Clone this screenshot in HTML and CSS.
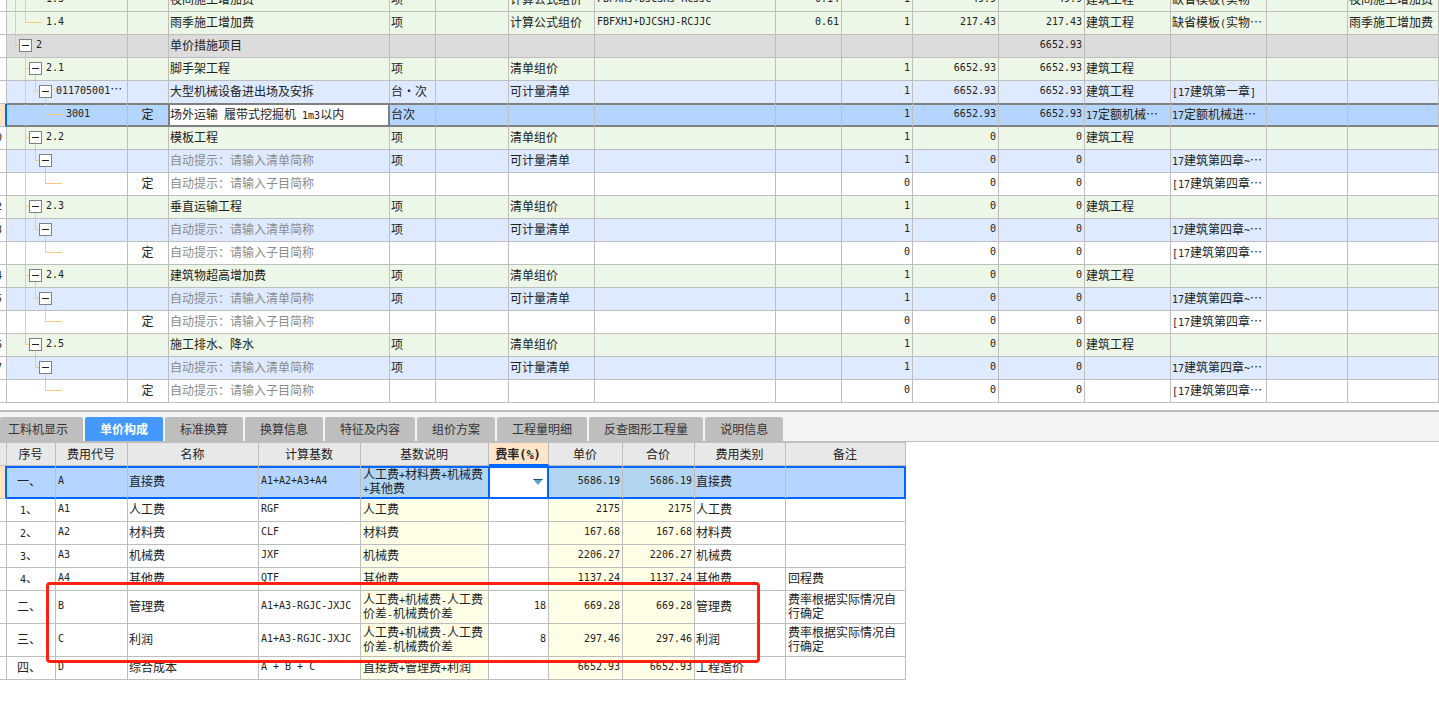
FILE: index.html
```html
<!DOCTYPE html>
<html lang="zh-CN">
<head>
<meta charset="utf-8">
<title>措施项目</title>
<link rel="stylesheet" href="styles.css">
</head>
<body>
<svg class="defs" aria-hidden="true">
  <symbol id="g-item"><path d="M8.5 0V22M18.5 0V22M18.5 10.5H35"/></symbol>
  <symbol id="g-item-last"><path d="M8.5 0V22M18.5 0V10.5H35"/></symbol>
  <symbol id="g-root"><path d="M8.5 0V10.5H12M18.5 17V22"/></symbol>
  <symbol id="g-group"><path d="M18.5 0V22M18.5 10.5H22M28.5 17V22"/></symbol>
  <symbol id="g-group-last"><path d="M18.5 0V10.5H22M28.5 17V22"/></symbol>
  <symbol id="g-list"><path d="M18.5 0V22M28.5 0V10.5H32M38.5 17V22"/></symbol>
  <symbol id="g-list-last"><path d="M28.5 0V10.5H32M38.5 17V22"/></symbol>
  <symbol id="g-leaf"><path d="M18.5 0V22M38.5 0V10.5H55"/></symbol>
  <symbol id="g-leaf-last"><path d="M38.5 0V10.5H55"/></symbol>
</svg>

<main>
<section class="measures">
<table class="grid items">
<colgroup><col class="w7"><col class="w121"><col class="w41"><col class="w221"><col class="w46"><col class="w73"><col class="w86"><col class="w181"><col class="w66"><col class="w71"><col class="w86"><col class="w86"><col class="w86"><col class="w96"><col class="w81"><col class="w91"></colgroup>
<tbody>
<tr class="group"><td></td><td><div class="tree l2"><svg><use href="#g-item"/></svg><span class="code">1.3</span></div></td><td></td><td>夜间施工增加费</td><td>项</td><td></td><td>计算公式组价</td><td>FBFXHJ+DJCSHJ-RCJJC</td><td>0.14</td><td>1</td><td>49.9</td><td>49.9</td><td>建筑工程</td><td>缺省模板<span class="n">(</span>实物…</td><td></td><td>夜间施工增加费</td></tr>
<tr class="group"><td></td><td><div class="tree l2"><svg><use href="#g-item-last"/></svg><span class="code">1.4</span></div></td><td></td><td>雨季施工增加费</td><td>项</td><td></td><td>计算公式组价</td><td>FBFXHJ+DJCSHJ-RCJJC</td><td>0.61</td><td>1</td><td>217.43</td><td>217.43</td><td>建筑工程</td><td>缺省模板<span class="n">(</span>实物…</td><td></td><td>雨季施工增加费</td></tr>
<tr class="root"><td></td><td><div class="tree l1"><svg><use href="#g-root"/></svg><button class="exp" aria-label="折叠"></button><span class="code">2</span></div></td><td></td><td>单价措施项目</td><td></td><td></td><td></td><td></td><td></td><td></td><td></td><td>6652.93</td><td></td><td></td><td></td><td></td></tr>
<tr class="group"><td></td><td><div class="tree l2"><svg><use href="#g-group"/></svg><button class="exp" aria-label="折叠"></button><span class="code">2.1</span></div></td><td></td><td>脚手架工程</td><td>项</td><td></td><td>清单组价</td><td></td><td></td><td>1</td><td>6652.93</td><td>6652.93</td><td>建筑工程</td><td></td><td></td><td></td></tr>
<tr class="list above"><td></td><td><div class="tree l3"><svg><use href="#g-list"/></svg><button class="exp" aria-label="折叠"></button><span class="code">011705001<span class="c">…</span></span></div></td><td></td><td>大型机械设备进出场及安拆</td><td>台・次</td><td></td><td>可计量清单</td><td></td><td></td><td>1</td><td>6652.93</td><td>6652.93</td><td>建筑工程</td><td><span class="n">[17</span>建筑第一章<span class="n">]</span></td><td></td><td></td></tr>
<tr class="current"><td></td><td><div class="tree l4"><svg><use href="#g-leaf"/></svg><span class="code">3001</span></div></td><td>定</td><td class="focus">场外运输<span class="n"> </span>履带式挖掘机<span class="n"> 1m3</span>以内</td><td>台次</td><td></td><td></td><td></td><td></td><td>1</td><td>6652.93</td><td>6652.93</td><td><span class="n">17</span>定额机械…</td><td><span class="n">17</span>定额机械进…</td><td></td><td></td></tr>
<tr class="group"><td><div class="no">10</div></td><td><div class="tree l2"><svg><use href="#g-group"/></svg><button class="exp" aria-label="折叠"></button><span class="code">2.2</span></div></td><td></td><td>模板工程</td><td>项</td><td></td><td>清单组价</td><td></td><td></td><td>1</td><td>0</td><td>0</td><td>建筑工程</td><td></td><td></td><td></td></tr>
<tr class="list"><td></td><td><div class="tree l3"><svg><use href="#g-list"/></svg><button class="exp" aria-label="折叠"></button></div></td><td></td><td class="hint">自动提示：请输入清单简称</td><td>项</td><td></td><td>可计量清单</td><td></td><td></td><td>1</td><td>0</td><td>0</td><td></td><td><span class="n">17</span>建筑第四章<span class="n">~</span>…</td><td></td><td></td></tr>
<tr><td></td><td><div class="tree l4"><svg><use href="#g-leaf"/></svg></div></td><td>定</td><td class="hint">自动提示：请输入子目简称</td><td></td><td></td><td></td><td></td><td></td><td>0</td><td>0</td><td>0</td><td></td><td><span class="n">[17</span>建筑第四章…</td><td></td><td></td></tr>
<tr class="group"><td><div class="no">12</div></td><td><div class="tree l2"><svg><use href="#g-group"/></svg><button class="exp" aria-label="折叠"></button><span class="code">2.3</span></div></td><td></td><td>垂直运输工程</td><td>项</td><td></td><td>清单组价</td><td></td><td></td><td>1</td><td>0</td><td>0</td><td>建筑工程</td><td></td><td></td><td></td></tr>
<tr class="list"><td><div class="no">13</div></td><td><div class="tree l3"><svg><use href="#g-list"/></svg><button class="exp" aria-label="折叠"></button></div></td><td></td><td class="hint">自动提示：请输入清单简称</td><td>项</td><td></td><td>可计量清单</td><td></td><td></td><td>1</td><td>0</td><td>0</td><td></td><td><span class="n">17</span>建筑第四章<span class="n">~</span>…</td><td></td><td></td></tr>
<tr><td></td><td><div class="tree l4"><svg><use href="#g-leaf"/></svg></div></td><td>定</td><td class="hint">自动提示：请输入子目简称</td><td></td><td></td><td></td><td></td><td></td><td>0</td><td>0</td><td>0</td><td></td><td><span class="n">[17</span>建筑第四章…</td><td></td><td></td></tr>
<tr class="group"><td><div class="no">14</div></td><td><div class="tree l2"><svg><use href="#g-group"/></svg><button class="exp" aria-label="折叠"></button><span class="code">2.4</span></div></td><td></td><td>建筑物超高增加费</td><td>项</td><td></td><td>清单组价</td><td></td><td></td><td>1</td><td>0</td><td>0</td><td>建筑工程</td><td></td><td></td><td></td></tr>
<tr class="list"><td><div class="no">15</div></td><td><div class="tree l3"><svg><use href="#g-list"/></svg><button class="exp" aria-label="折叠"></button></div></td><td></td><td class="hint">自动提示：请输入清单简称</td><td>项</td><td></td><td>可计量清单</td><td></td><td></td><td>1</td><td>0</td><td>0</td><td></td><td><span class="n">17</span>建筑第四章<span class="n">~</span>…</td><td></td><td></td></tr>
<tr><td></td><td><div class="tree l4"><svg><use href="#g-leaf"/></svg></div></td><td>定</td><td class="hint">自动提示：请输入子目简称</td><td></td><td></td><td></td><td></td><td></td><td>0</td><td>0</td><td>0</td><td></td><td><span class="n">[17</span>建筑第四章…</td><td></td><td></td></tr>
<tr class="group"><td><div class="no">16</div></td><td><div class="tree l2"><svg><use href="#g-group-last"/></svg><button class="exp" aria-label="折叠"></button><span class="code">2.5</span></div></td><td></td><td>施工排水、降水</td><td>项</td><td></td><td>清单组价</td><td></td><td></td><td>1</td><td>0</td><td>0</td><td>建筑工程</td><td></td><td></td><td></td></tr>
<tr class="list"><td><div class="no">17</div></td><td><div class="tree l3"><svg><use href="#g-list-last"/></svg><button class="exp" aria-label="折叠"></button></div></td><td></td><td class="hint">自动提示：请输入清单简称</td><td>项</td><td></td><td>可计量清单</td><td></td><td></td><td>1</td><td>0</td><td>0</td><td></td><td><span class="n">17</span>建筑第四章<span class="n">~</span>…</td><td></td><td></td></tr>
<tr><td></td><td><div class="tree l4"><svg><use href="#g-leaf-last"/></svg></div></td><td>定</td><td class="hint">自动提示：请输入子目简称</td><td></td><td></td><td></td><td></td><td></td><td>0</td><td>0</td><td>0</td><td></td><td><span class="n">[17</span>建筑第四章…</td><td></td><td></td></tr>
</tbody>
</table>
</section>

<section class="detail">
<nav class="tabs" role="tablist">
  <button class="tab" role="tab">工料机显示</button>
  <button class="tab active" role="tab" aria-selected="true">单价构成</button>
  <button class="tab" role="tab">标准换算</button>
  <button class="tab" role="tab">换算信息</button>
  <button class="tab" role="tab">特征及内容</button>
  <button class="tab" role="tab">组价方案</button>
  <button class="tab" role="tab">工程量明细</button>
  <button class="tab" role="tab">反查图形工程量</button>
  <button class="tab" role="tab">说明信息</button>
</nav>
<div class="sheet">
<table class="grid fees">
<colgroup><col class="w7"><col class="w49"><col class="w72"><col class="w131"><col class="w102"><col class="w128"><col class="w60"><col class="w74"><col class="w72"><col class="w91"><col class="w120"></colgroup>
<thead>
<tr><th></th><th>序号</th><th>费用代号</th><th>名称</th><th>计算基数</th><th>基数说明</th><th class="picked" id="rate">费率<span class="n">(%)</span></th><th>单价</th><th>合价</th><th>费用类别</th><th>备注</th></tr>
</thead>
<tbody>
<tr class="chosen tall"><td></td><td>一、</td><td>A</td><td>直接费</td><td>A1+A2+A3+A4</td><td>人工费<span class="n">+</span>材料费<span class="n">+</span>机械费<span class="n">+</span>其他费</td><td class="pick"><div class="combo"><select aria-labelledby="rate"><option></option></select><svg width="10" height="6"><path d="M0 0H10L5 6Z" fill="#5ba3d0"/><path d="M0 0H10L9 1H1Z" fill="#1d4f7c"/></svg></div></td><td>5686.19</td><td>5686.19</td><td>直接费</td><td></td></tr>
<tr><td></td><td><span class="n">1</span>、</td><td>A1</td><td>人工费</td><td>RGF</td><td>人工费</td><td></td><td>2175</td><td>2175</td><td>人工费</td><td></td></tr>
<tr><td></td><td><span class="n">2</span>、</td><td>A2</td><td>材料费</td><td>CLF</td><td>材料费</td><td></td><td>167.68</td><td>167.68</td><td>材料费</td><td></td></tr>
<tr><td></td><td><span class="n">3</span>、</td><td>A3</td><td>机械费</td><td>JXF</td><td>机械费</td><td></td><td>2206.27</td><td>2206.27</td><td>机械费</td><td></td></tr>
<tr><td></td><td><span class="n">4</span>、</td><td>A4</td><td>其他费</td><td>QTF</td><td>其他费</td><td></td><td>1137.24</td><td>1137.24</td><td>其他费</td><td>回程费</td></tr>
<tr class="tall"><td></td><td>二、</td><td>B</td><td>管理费</td><td>A1+A3-RGJC-JXJC</td><td>人工费<span class="n">+</span>机械费<span class="n">-</span>人工费价差<span class="n">-</span>机械费价差</td><td>18</td><td>669.28</td><td>669.28</td><td>管理费</td><td>费率根据实际情况自行确定</td></tr>
<tr class="tall"><td></td><td>三、</td><td>C</td><td>利润</td><td>A1+A3-RGJC-JXJC</td><td>人工费<span class="n">+</span>机械费<span class="n">-</span>人工费价差<span class="n">-</span>机械费价差</td><td>8</td><td>297.46</td><td>297.46</td><td>利润</td><td>费率根据实际情况自行确定</td></tr>
<tr><td></td><td>四、</td><td>D</td><td>综合成本</td><td>A + B + C</td><td>直接费<span class="n">+</span>管理费<span class="n">+</span>利润</td><td></td><td>6652.93</td><td>6652.93</td><td>工程造价</td><td></td></tr>
</tbody>
</table>
<div class="mark"></div>
</div>
</section>
</main>
</body>
</html>
```
FILE: styles.css
```css
* { box-sizing: border-box; }
body {
  margin: 0;
  background: #fff;
  color: #222;
  font: 12px/14px "Noto Sans CJK SC", sans-serif;
}
.defs { position: absolute; width: 0; height: 0; }

.w7 { width: 7px; } .w41 { width: 41px; } .w46 { width: 46px; } .w49 { width: 49px; }
.w60 { width: 60px; } .w66 { width: 66px; } .w71 { width: 71px; } .w72 { width: 72px; }
.w73 { width: 73px; } .w74 { width: 74px; } .w81 { width: 81px; } .w86 { width: 86px; }
.w91 { width: 91px; } .w96 { width: 96px; } .w102 { width: 102px; } .w120 { width: 120px; }
.w121 { width: 121px; } .w128 { width: 128px; } .w131 { width: 131px; } .w181 { width: 181px; }
.w221 { width: 221px; }

/* shared grid */
.grid { table-layout: fixed; border-collapse: separate; border-spacing: 0; }
.grid td, .grid th {
  height: 23px;
  padding: 0 2px 2px 1px;
  border-right: 1px solid #bebebe;
  border-bottom: 1px solid #bebebe;
  overflow: hidden;
  vertical-align: middle;
  text-align: left;
  font-weight: 400;
}
.grid td:first-child, .grid th:first-child { padding: 0; }
.n {
  font-family: "DejaVu Sans Mono", monospace;
  font-size: 10px;
  line-height: 0;
  white-space: pre;
}
.c { font-family: "Noto Sans CJK SC", sans-serif; font-size: 12px; line-height: 0; }

/* measure items, scrolled part of a row down */
.measures { overflow: hidden; padding-bottom: 7px; }
.items { width: 100%; margin-top: -11px; white-space: nowrap; }
.items td:nth-child(2) { padding: 0; }
.items td:nth-child(3) { text-align: center; }
.items td:nth-child(n+8):nth-child(-n+12) {
  padding-left: 2px;
  font-family: "DejaVu Sans Mono", monospace;
  font-size: 10px;
}
.items td:nth-child(n+9):nth-child(-n+12) { text-align: right; }
.root td { background: #dcdcdc; }
.group td { background: #ecf7e7; }
.list td { background: #ddeaff; }
.items tr td:first-child { background: #fff; }
.items .above td:not(:first-child) { border-bottom-color: #808080; }
.items .current td {
  background: #b3d5ff;
  border-bottom-color: #808080;
  box-shadow: inset 0 1px #808080, inset 0 -1px #808080;
}
.items .current td:nth-child(3) { border-right-color: #808080; }
.items .current td:first-child {
  background: #ffe5c5;
  border-right: 2px solid #0066ff;
  border-bottom-color: #bebebe;
  box-shadow: none;
}
.items .current .focus {
  background: #fff;
  border-right-color: #808080;
  box-shadow: inset 1px 1px #808080, inset -1px -1px #808080;
}
.hint { color: #8c8c8c; }
.no {
  display: flex;
  justify-content: flex-end;
  padding-right: 4px;
  font-family: "DejaVu Sans Mono", monospace;
  font-size: 10px;
}
.tree { position: relative; display: flex; align-items: center; height: 22px; }
.tree svg {
  position: absolute;
  left: 0;
  top: 0;
  width: 60px;
  height: 22px;
  fill: none;
  stroke: #ffc878;
}
.l1 { padding-left: 12px; }
.l2 { padding-left: 22px; }
.l3 { padding-left: 32px; }
.l4 { padding-left: 42px; }
.code {
  padding-left: 4px;
  padding-bottom: 2px;
  font-family: "DejaVu Sans Mono", monospace;
  font-size: 10px;
}
svg + .code { padding-left: 17px; }
.exp {
  position: relative;
  flex: none;
  width: 13px;
  height: 13px;
  margin-bottom: 1px;
  padding: 0;
  border: 1px solid #808080;
  background: linear-gradient(#222, #222) center / 7px 1px no-repeat #fff;
}

/* detail panel */
.detail { border-top: 2px solid #bebebe; }
.tabs {
  display: flex;
  gap: 2px;
  padding-top: 5px;
  background: #f4f4f4;
  border-bottom: 1px solid #bebebe;
}
.tab {
  height: 24px;
  padding: 0 15px;
  border: 0;
  border-radius: 2px 2px 0 0;
  background: #bebebe;
  color: #333;
  font: 12px/24px "Noto Sans CJK SC", sans-serif;
}
.tab:first-child { padding-left: 8px; }
.tab.active { background: #4499ff; color: #fff; font-weight: 700; }

.sheet { position: relative; }
.fees { width: 906px; }
.fees th {
  height: 24px;
  padding-bottom: 0;
  border-top: 1px solid #bebebe;
  background: #e8e8e8;
  text-align: center;
}
.fees .picked { background: #ffe5c8; border-bottom: 2px solid #0066ff; font-weight: 700; }
.picked .n { font-size: 12px; }
.fees .tall td { height: 33px; }
.fees td:nth-child(2) { padding-right: 5px; text-align: center; }
.fees td:nth-child(3), .fees td:nth-child(5),
.fees td:nth-child(7), .fees td:nth-child(8), .fees td:nth-child(9) {
  padding-left: 2px;
  font-family: "DejaVu Sans Mono", monospace;
  font-size: 10px;
}
.fees td:nth-child(6), .fees td:nth-child(11) { padding-left: 2px; }
.fees td:nth-child(7), .fees td:nth-child(8), .fees td:nth-child(9) { text-align: right; }
.fees td:nth-child(6), .fees td:nth-child(8), .fees td:nth-child(9) { background: #ffffe8; }
.fees .chosen td {
  background: #b3d5ff;
  border-bottom-color: #0066ff;
  box-shadow: inset 0 2px #0066ff, inset 0 -1px #0066ff;
}
.fees .chosen td:nth-child(6), .fees .chosen td:nth-child(8), .fees .chosen td:nth-child(9) { background: #b2d6f2; }
.fees .chosen td:first-child {
  background: #ffe5c5;
  border-right: 2px solid #0066ff;
  border-bottom-color: #bebebe;
  box-shadow: none;
}
.fees .chosen td:nth-child(6) { border-right-color: #0066ff; }
.fees .chosen td:last-child {
  border-right-color: #0066ff;
  box-shadow: inset 0 2px #0066ff, inset -1px -1px #0066ff;
}
.fees .chosen .pick {
  padding: 0;
  background: #fff;
  border-right-color: #0066ff;
  box-shadow: inset 1px 2px #0066ff, inset -1px -1px #0066ff;
}
.combo { display: grid; align-items: center; padding: 0 5px 0 2px; }
.combo > * { grid-area: 1 / 1; }
.combo select {
  width: 100%;
  height: 22px;
  border: 0;
  background: transparent;
  appearance: none;
}
.combo svg { justify-self: end; pointer-events: none; }

.mark {
  position: absolute;
  left: 46px;
  top: 140px;
  width: 714px;
  height: 81px;
  border: 3px solid #ff2010;
  border-radius: 4px;
  pointer-events: none;
}
```
